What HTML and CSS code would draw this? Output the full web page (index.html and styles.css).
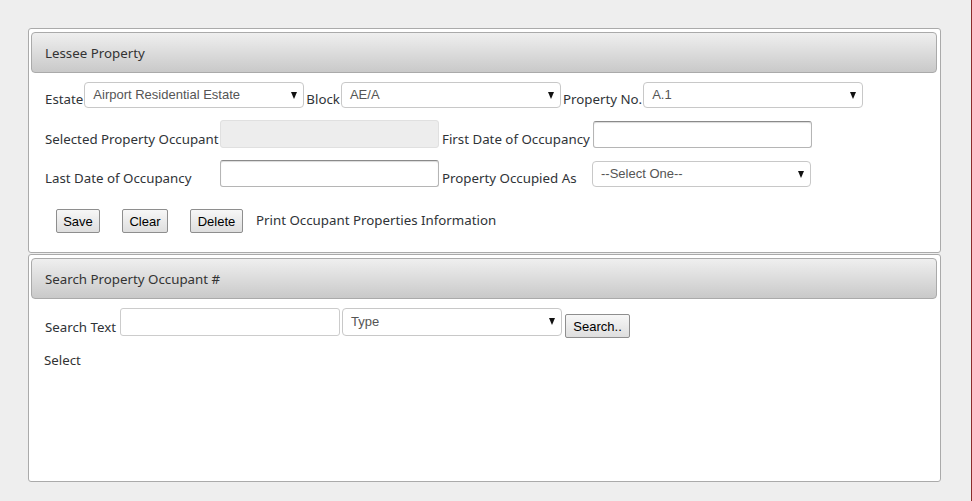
FILE: index.html
```html
<!DOCTYPE html>
<html>
<head>
<meta charset="utf-8">
<link rel="stylesheet" href="styles.css">
</head>
<body>
<div class="page">
  <div class="panel panel-top">
    <div class="panel-head">Lessee Property</div>
    <div class="panel-body">
      <div class="row row-inline">
        <label class="lbl">Estate</label>
        <div class="sel"><span>Airport Residential Estate</span></div>
        <label class="lbl">Block</label>
        <div class="sel"><span>AE/A</span></div>
        <label class="lbl">Property No.</label>
        <div class="sel"><span>A.1</span></div>
      </div>
      <div class="row row-grid row-2">
        <label class="lbl">Selected Property Occupant</label>
        <div class="inp disabled"></div>
        <label class="lbl">First Date of Occupancy</label>
        <div class="inp inset"></div>
      </div>
      <div class="row row-grid row-3">
        <label class="lbl">Last Date of Occupancy</label>
        <div class="inp inset"></div>
        <label class="lbl">Property Occupied As</label>
        <div class="sel sel-short"><span>--Select One--</span></div>
      </div>
      <div class="row row-buttons">
        <button class="btn btn-save">Save</button>
        <button class="btn btn-clear">Clear</button>
        <button class="btn btn-delete">Delete</button>
        <span class="lbl link">Print Occupant Properties Information</span>
      </div>
    </div>
  </div>
  <div class="panel panel-bottom">
    <div class="panel-head">Search Property Occupant #</div>
    <div class="panel-body">
      <div class="row row-search">
        <label class="lbl">Search Text</label>
        <div class="inp plain"></div>
        <div class="sel"><span>Type</span></div>
        <button class="btn btn-search">Search..</button>
      </div>
      <div class="select-text">Select</div>
    </div>
  </div>
</div>
</body>
</html>
```

FILE: styles.css
```css
html {
  margin: 0;
  background: #eeeeee;
  border-right: 1px solid #8b2b2b;
}
body {
  margin: 0;
  height: 501px;
  font-family: "Noto Sans", "Open Sans", sans-serif;
  font-size: 13.3px;
  color: #333;
}
.page {
  padding: 28px 0 0 28px;
}
.panel {
  width: 906px;
  background: #fff;
  border: 1px solid #aaa;
  border-radius: 3px;
  padding: 3px 3px 0 2px;
  box-sizing: content-box;
}
.panel-top {
  height: 220px;
}
.panel-bottom {
  margin-top: 1px;
  height: 223px;
}
.panel-head {
  height: 39px;
  border: 1px solid #aaa;
  border-radius: 4px;
  background: linear-gradient(#efefef, #c9c9c9);
  display: flex;
  align-items: center;
  padding-left: 13px;
  color: #333;
  font-size: 13.3px;
}
.panel-body {
  padding: 9px 0 0 14px;
}
.row {
  display: flex;
  align-items: flex-end;
}
.lbl {
  line-height: 17px;
  white-space: nowrap;
  color: #2f3337;
}
.row-inline .lbl {
  margin-right: 1px;
}
.row-inline .sel {
  margin-right: 2px;
}
.sel {
  position: relative;
  height: 24px;
  border: 1px solid #c8c8c8;
  border-radius: 4px;
  background: #fff;
  font-family: "Liberation Sans", Arial, sans-serif;
  font-size: 13px;
  color: #555;
  display: flex;
  align-items: center;
  padding-left: 8px;
  box-sizing: content-box;
  width: 210px;
  flex: none;
}
.sel span {
  margin-top: -2px;
}
.sel::after {
  content: "";
  position: absolute;
  right: 6px;
  top: 9px;
  border-top: 7px solid #111;
  border-left: 3px solid transparent;
  border-right: 3px solid transparent;
}
.row-grid {
  display: grid;
  grid-template-columns: 175px 219px 154px 219px;
  column-gap: 0;
  align-items: end;
}
.row-grid > :nth-child(3) {
  margin-left: 3px;
}
.row-2 {
  margin-top: 12px;
}
.row-3 {
  margin-top: 12px;
}
.row-3 .sel {
  width: 209px;
  margin-left: -1px;
}
.inp {
  height: 26px;
  border: 1px solid #c0c0c0;
  border-radius: 3px;
  background: #fff;
  flex: none;
}
.inp.disabled {
  background: #ededed;
  border-color: #e0e0e0;
  height: 26px;
}
.inp.inset {
  border-color: #b5b5b5;
  border-top-color: #8a8a8a;
  box-shadow: inset 0 1px 1px rgba(0,0,0,0.15);
  height: 25px;
}
.row-buttons {
  margin-top: 22px;
  padding-left: 11px;
  align-items: center;
}
.btn {
  font-family: "Liberation Sans", Arial, sans-serif;
  font-size: 13px;
  color: #000;
  height: 24px;
  padding: 0;
  box-sizing: border-box;
  border: 1px solid #8e8e8e;
  border-radius: 2px;
  background: linear-gradient(#f7f7f7, #dedede);
  margin-right: 22px;
}
.btn-save { width: 44px; }
.btn-clear { width: 46px; }
.btn-delete { width: 53px; margin-right: 13px; }
.link {
  margin-top: -2px;
}
.row-search .lbl {
  margin-right: 4px;
}
.inp.plain {
  width: 218px;
  height: 26px;
  border-color: #cccccc;
  margin-right: 2px;
}
.row-search .sel {
  height: 26px;
  margin-right: 3px;
}
.btn-search {
  margin: 0 0 -2px 0;
  width: 65px;
}
.select-text {
  margin-top: 16px;
  margin-left: -1px;
  line-height: 17px;
}
```
